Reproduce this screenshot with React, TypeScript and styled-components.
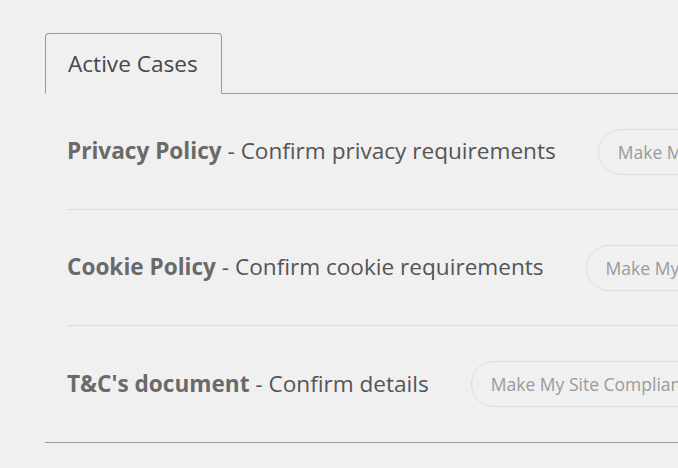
import React from "react";
import styled, { createGlobalStyle } from "styled-components";

const Global = createGlobalStyle`
  html, body {
    margin: 0;
    padding: 0;
    background: #f0f0f0;
    overflow: hidden;
  }
  body {
    font-family: "Open Sans", "Noto Sans", sans-serif;
  }
`;

const Page = styled.div`
  width: 678px;
  height: 468px;
  padding: 33px 0 0 45px;
  box-sizing: border-box;
  overflow: hidden;
`;

const Tabs = styled.div`
  display: flex;
  margin-bottom: -1px;
`;

const Tab = styled.div`
  box-sizing: border-box;
  width: 177px;
  height: 61px;
  padding: 0 0 0 22px;
  display: flex;
  align-items: center;
  border: 1px solid #9a9a9a;
  border-bottom: 1px solid #f0f0f0;
  border-radius: 4px 4px 0 0;
  background: #f0f0f0;
  color: #474747;
  font-size: 22.6px;
  position: relative;
  z-index: 1;
`;

const Panel = styled.div`
  width: 900px;
  border-top: 1px solid #9a9a9a;
  border-bottom: 1px solid #9a9a9a;
  padding-left: 22px;
`;

const Row = styled.div`
  display: flex;
  align-items: center;
  gap: 42px;
  height: 115px;
  border-top: 1px solid #dcdcdc;
  &:first-child {
    border-top: none;
    height: 115px;
  }
  &:last-child {
    height: 116px;
  }
`;

const Title = styled.div`
  font-size: 22.6px;
  color: #555;
  white-space: nowrap;
  margin-top: -2px;
  b {
    font-weight: 700;
    color: #6a6a6a;
  }
`;

const Button = styled.button`
  flex: none;
  height: 46px;
  padding: 0 19px;
  border: 1px solid #dedede;
  border-radius: 23px;
  background: transparent;
  color: #9a9a9a;
  font-family: "Open Sans", "Noto Sans", sans-serif;
  font-size: 17.5px;
  white-space: nowrap;
`;

const cases = [
  { name: "Privacy Policy", desc: "Confirm privacy requirements" },
  { name: "Cookie Policy", desc: "Confirm cookie requirements" },
  { name: "T&C's document", desc: "Confirm details" },
];

export default function App() {
  return (
    <>
      <Global />
      <Page>
        <Tabs>
          <Tab>Active Cases</Tab>
        </Tabs>
        <Panel>
          {cases.map((c) => (
            <Row key={c.name}>
              <Title>
                <b>{c.name}</b> - {c.desc}
              </Title>
              <Button>Make My Site Compliant</Button>
            </Row>
          ))}
        </Panel>
      </Page>
    </>
  );
}
